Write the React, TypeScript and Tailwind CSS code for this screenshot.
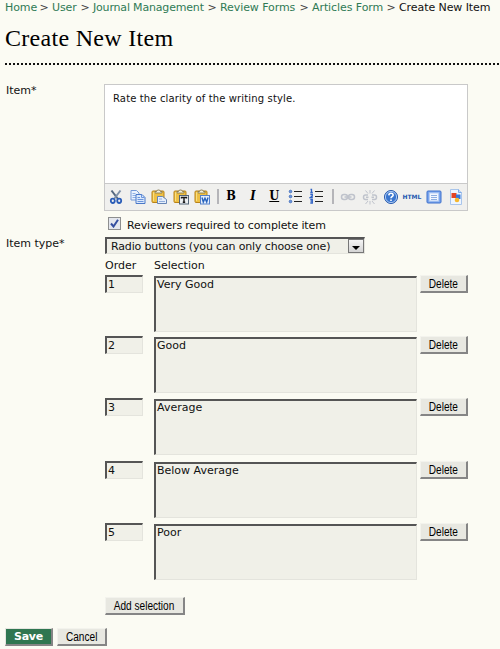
import React from 'react';

const sans = "font-['DejaVu_Sans',Verdana,sans-serif]";

const crumbs = [
  { label: 'Home', w: 'w-[31px]' },
  { label: 'User', w: 'w-[25px]' },
  { label: 'Journal Management', w: 'w-[111px]' },
  { label: 'Review Forms', w: 'w-[76px]' },
  { label: 'Articles Form', w: 'w-[71px]' },
];

const options = ['Very Good', 'Good', 'Average', 'Below Average', 'Poor'];

function Button({ children, className = '' }: { children: React.ReactNode; className?: string }) {
  return (
    <button
      className={`flex h-[18px] shrink-0 items-start justify-center whitespace-nowrap border border-b-2 border-r-2 border-b-[#858585] border-l-[#f3f3ed] border-r-[#858585] border-t-[#f3f3ed] bg-[#e8e8e1] font-['Liberation_Sans',sans-serif] text-[12px] leading-[17px] text-black ${className}`}
    >
      <span className="block scale-x-[0.84]">{children}</span>
    </button>
  );
}

function Separator() {
  return <span className="h-[15px] w-[2px] shrink-0 bg-[#b5b5b9]" />;
}

function Svg({ children }: { children: React.ReactNode }) {
  return (
    <svg width="16" height="16" viewBox="0 0 16 16" className="shrink-0">
      {children}
    </svg>
  );
}

function Cut() {
  return (
    <Svg>
      <path d="M3.500 1.500L10 10" stroke="#53677f" strokeWidth="2" fill="none" />
      <path d="M12.500 1.500L6 10" stroke="#7d90a8" strokeWidth="2" fill="none" />
      <ellipse cx="4.800" cy="11.800" rx="2" ry="2.200" fill="none" stroke="#2a5db8" strokeWidth="1.800" />
      <ellipse cx="11.200" cy="11.800" rx="2" ry="2.200" fill="none" stroke="#2a5db8" strokeWidth="1.800" />
    </Svg>
  );
}

function Copy() {
  return (
    <Svg>
      <path d="M1 1.500h5.500l2.500 2.500v7h-8z" fill="#eaf2fd" stroke="#7499d8" />
      <path d="M2.500 4.500h3M2.500 6.500h4M2.500 8.500h4" stroke="#8fb0e6" />
      <path d="M6 5.500h6l3 3v6H6z" fill="#dbe9fc" stroke="#4a78c8" />
      <path d="M11.500 5.500v3h3M7.500 8.500h2.500M7.500 10.500h6M7.500 12.500h6" stroke="#6c95dc" fill="none" />
    </Svg>
  );
}

function Paste({ kind }: { kind: 'plain' | 'text' | 'word' }) {
  return (
    <Svg>
      <rect x="1" y="2" width="12" height="11.500" rx="1" fill="#eec044" stroke="#b98318" />
      <path d="M2.500 12V3.500H6" stroke="#f8df83" fill="none" />
      <path d="M4 4V2.500h1.500L6.500 1h2l1 1.500H11V4z" fill="#f4f0dc" stroke="#7d7147" strokeWidth=".8" />
      {kind === 'plain' && (
        <>
          <path d="M6.500 7.500h5l4 3v4h-9z" fill="#e5eefb" stroke="#6685b5" />
          <path d="M8 10h3M8 12.500h6" stroke="#91addb" />
        </>
      )}
      {kind === 'text' && (
        <>
          <rect x="6.500" y="6.500" width="9" height="8.500" fill="#edf0f2" stroke="#536477" />
          <path d="M8.500 9.500V8.500h5v1M11 8.500V13.300M9.800 13.300h2.400" stroke="#181818" strokeWidth="1.400" fill="none" />
        </>
      )}
      {kind === 'word' && (
        <>
          <rect x="6.500" y="6.500" width="9" height="8.500" fill="#e5effd" stroke="#5480c9" />
          <path d="M8 8.500l1.300 4.500L11 9.200l1.700 3.800L14 8.500" stroke="#2763bd" strokeWidth="1.400" fill="none" />
        </>
      )}
    </Svg>
  );
}

function ListIcon({ numbered = false }: { numbered?: boolean }) {
  return (
    <Svg>
      <path d="M6 3.500h8M6 8.500h8M6 13.500h8" stroke="#222" strokeWidth="1" />
      {numbered ? (
        <path
          d="M1.500 1.500h1v3M1.300 4.500h2.500M1.300 6.500h2v1.500l-2 1.500h2.500M1.300 11.500h2v3.500h-2M1.500 13.200h1.800"
          stroke="#2f62c5"
          fill="none"
          strokeWidth="1.300"
        />
      ) : (
        <g fill="#6a97df" stroke="#3865b6" strokeWidth=".8">
          <circle cx="2.500" cy="3.500" r="1.300" />
          <circle cx="2.500" cy="8.500" r="1.300" />
          <circle cx="2.500" cy="13.500" r="1.300" />
        </g>
      )}
    </Svg>
  );
}

function LinkIcon({ broken = false }: { broken?: boolean }) {
  return (
    <Svg>
      <g fill="none" stroke="#bfc3cc" strokeWidth="1.500">
        {broken ? (
          <>
            <path d="M6 6H3.500Q1.500 6 1.500 8.200T3.500 10.500H6M10 6h2.500q2 0 2 2.200t-2 2.300H10M4 8.200h2.500M9.500 8.200h2.500" />
            <path d="M8 1v3.500M3.500 1.500l2.500 3M12.500 1.500l-2.500 3M8 15.500V12M3.500 15l2.500-3M12.500 15l-2.500-3" strokeWidth="1" />
          </>
        ) : (
          <>
            <rect x="1.500" y="5.500" width="6" height="5" rx="2.500" />
            <rect x="8.500" y="5.500" width="6" height="5" rx="2.500" />
            <path d="M4.500 8h7" />
          </>
        )}
      </g>
    </Svg>
  );
}

function Help() {
  return (
    <Svg>
      <circle cx="8" cy="8" r="6.500" fill="#3975ce" stroke="#2659ac" />
      <circle cx="8" cy="8" r="5.600" fill="none" stroke="#b8d0f5" strokeWidth=".9" />
      <path d="M5.800 6.300Q6 4.300 8 4.300T10.200 6Q10.200 7 8.900 7.700Q8 8.200 8 9.300M8 10.500v1.500" fill="none" stroke="#fff" strokeWidth="1.600" />
    </Svg>
  );
}

function Fullscreen() {
  return (
    <Svg>
      <rect x="1" y="2" width="14" height="12" rx="1" fill="#7ba6ef" stroke="#3f70cb" />
      <rect x="3.500" y="4" width="9" height="8" fill="#f2f7ff" stroke="#b9cff3" />
      <path d="M5 6.500h6M5 8.500h6M5 10.500h6" stroke="#8eaee1" />
    </Svg>
  );
}

function MediaIcon() {
  return (
    <Svg>
      <path d="M2.500.5h8l3 3v12h-11z" fill="#eef5ff" stroke="#a9c5eb" />
      <path d="M10.500.5v3h3" fill="#c7dcf9" stroke="#7daae7" />
      <path d="M3.500 4h5v5h-5z" fill="#e24425" />
      <path d="M8 5.500h4.500V10H8z" fill="#3478dc" />
      <circle cx="9" cy="11" r="2.300" fill="#f5b72e" />
    </Svg>
  );
}

function Letter({ children, className = '' }: { children: string; className?: string }) {
  return (
    <span className="w-[16px] shrink-0 text-center font-['DejaVu_Serif',serif] text-[12px] font-bold leading-[17px] text-black">
      <span className={`inline-block scale-x-[0.95] ${className}`}>{children}</span>
    </span>
  );
}

export default function App() {
  return (
    <main className={`h-[649px] w-[500px] overflow-hidden bg-[#fbfbf3] text-[11px] leading-[14px] text-[#111] ${sans}`}>
      <nav className="flex h-[25px] whitespace-nowrap pl-[5px] pt-px tracking-[-0.08px]">
        {crumbs.map((c) => (
          <React.Fragment key={c.label}>
            <a className={`shrink-0 text-[#2f7a55] ${c.label === 'Journal Management' ? 'tracking-[-0.18px]' : ''} ${c.w}`}>{c.label}</a>
            <span className="w-[16px] shrink-0 text-center text-[#444]">&gt;</span>
          </React.Fragment>
        ))}
        <span>Create New Item</span>
      </nav>
      <h1 className="ml-[5px] h-[38px] whitespace-nowrap font-[Georgia,'Liberation_Serif',serif] text-[24px] leading-[26px] tracking-[0.3px] text-black">
        Create New Item
      </h1>
      <div className="ml-[5px] h-[2px] bg-[repeating-linear-gradient(90deg,#111_0_2px,transparent_2px_4px)]" />

      <section className="mt-[19px] flex">
        <label className="w-[104px] shrink-0 pl-[6px]">Item*</label>
        <div className="h-[127px] w-[364px] shrink-0 border border-[#c9c9c9]">
          <div className="h-[98px] bg-white pl-[8px] pt-[7px] text-[10px] leading-[14px] tracking-[0.14px]">Rate the clarity of the writing style.</div>
          <div className="flex h-[27px] items-center border-t border-[#c9c9c9] bg-[#f0f0ee] pb-px pl-[3px]">
            <div className="flex gap-[5.500px]">
              <Cut />
              <Copy />
              <Paste kind="plain" />
              <Paste kind="text" />
              <Paste kind="word" />
            </div>
            <span className="w-[7px]" />
            <Separator />
            <div className="ml-[4px] flex gap-[5.500px]">
              <Letter>B</Letter>
              <Letter className="italic">I</Letter>
              <Letter className="underline">U</Letter>
              <ListIcon />
              <ListIcon numbered />
            </div>
            <span className="w-[7px]" />
            <Separator />
            <div className="ml-[6px] flex items-center gap-[5.500px]">
              <LinkIcon />
              <LinkIcon broken />
              <Help />
              <span className="w-[16px] text-center text-[6px] font-bold leading-[16px] text-[#2558b0]">
                <span className="-ml-[2px]">HTML</span>
              </span>
              <Fullscreen />
              <MediaIcon />
            </div>
          </div>
        </div>
      </section>

      <div className="ml-[108px] mt-[6px] flex h-[20px] items-start">
        <span className="flex h-[13px] w-[13px] shrink-0 items-center justify-center border border-[#8e8f8f] bg-[#e4e7ee]">
          <svg width="9" height="9" viewBox="0 0 9 9">
            <path d="M1 4.500l2.500 3L8 .8" fill="none" stroke="#344fa0" strokeWidth="2" />
          </svg>
        </span>
        <span className="ml-[6px] mt-[2px] whitespace-nowrap tracking-[-0.14px]">Reviewers required to complete item</span>
      </div>

      <section className="flex h-[38px]">
        <label className="w-[105px] shrink-0 pl-[6px]">Item type*</label>
        <div>
          <div className="flex h-[17px] w-[260px] justify-between border-2 border-b border-r border-b-[#e4e4dd] border-l-[#555] border-r-[#e4e4dd] border-t-[#555] bg-[#f0f0e8] pl-[4px]">
            <span className="whitespace-nowrap leading-[15px] tracking-[-0.15px]">Radio buttons (you can only choose one)</span>
            <span className="flex h-[14px] w-[16px] items-center justify-center border border-[#777] bg-gradient-to-b from-[#f5f5f5] to-[#d4d4d4]">
              <span className="mt-[4px] border-x-[4px] border-t-[4px] border-x-transparent border-t-black" />
            </span>
          </div>
          <div className="mt-[5px] flex">
            <span className="w-[49px]">Order</span>
            <span>Selection</span>
          </div>
        </div>
      </section>

      <section className="ml-[105px] flex flex-col">
        {options.map((option, i) => (
          <div key={option} className={`flex items-start ${i === 0 ? 'h-[61px]' : i === 2 ? 'h-[63px]' : 'h-[62px]'}`}>
            <div className="h-[18px] w-[38px] shrink-0 border-2 border-b border-r border-b-[#e4e4dd] border-l-[#555] border-r-[#e4e4dd] border-t-[#555] bg-[#f0f0e8] pl-px leading-[16px]">
              {i + 1}
            </div>
            <div className="ml-[11px] mt-px h-[56px] w-[263px] shrink-0 border-2 border-b border-r border-b-[#e4e4dd] border-l-[#555] border-r-[#e4e4dd] border-t-[#555] bg-[#f0f0e8] pl-px leading-[14px]">
              {option}
            </div>
            <Button className="ml-[3px] w-[48px]">Delete</Button>
          </div>
        ))}
      </section>
      <Button className="ml-[105px] mt-[12px] w-[80px]">Add selection</Button>
      <div className="ml-[5px] mt-[13px] flex gap-[4px]">
        <button className="h-[18px] w-[48px] border border-b-2 border-r-2 border-b-[#858585] border-l-[#e5e5df] border-r-[#858585] border-t-[#e5e5df] bg-[#2f7650] text-center font-bold leading-[15px] tracking-[-0.3px] text-white">
          Save
        </button>
        <Button className="w-[50px]">Cancel</Button>
      </div>
    </main>
  );
}
